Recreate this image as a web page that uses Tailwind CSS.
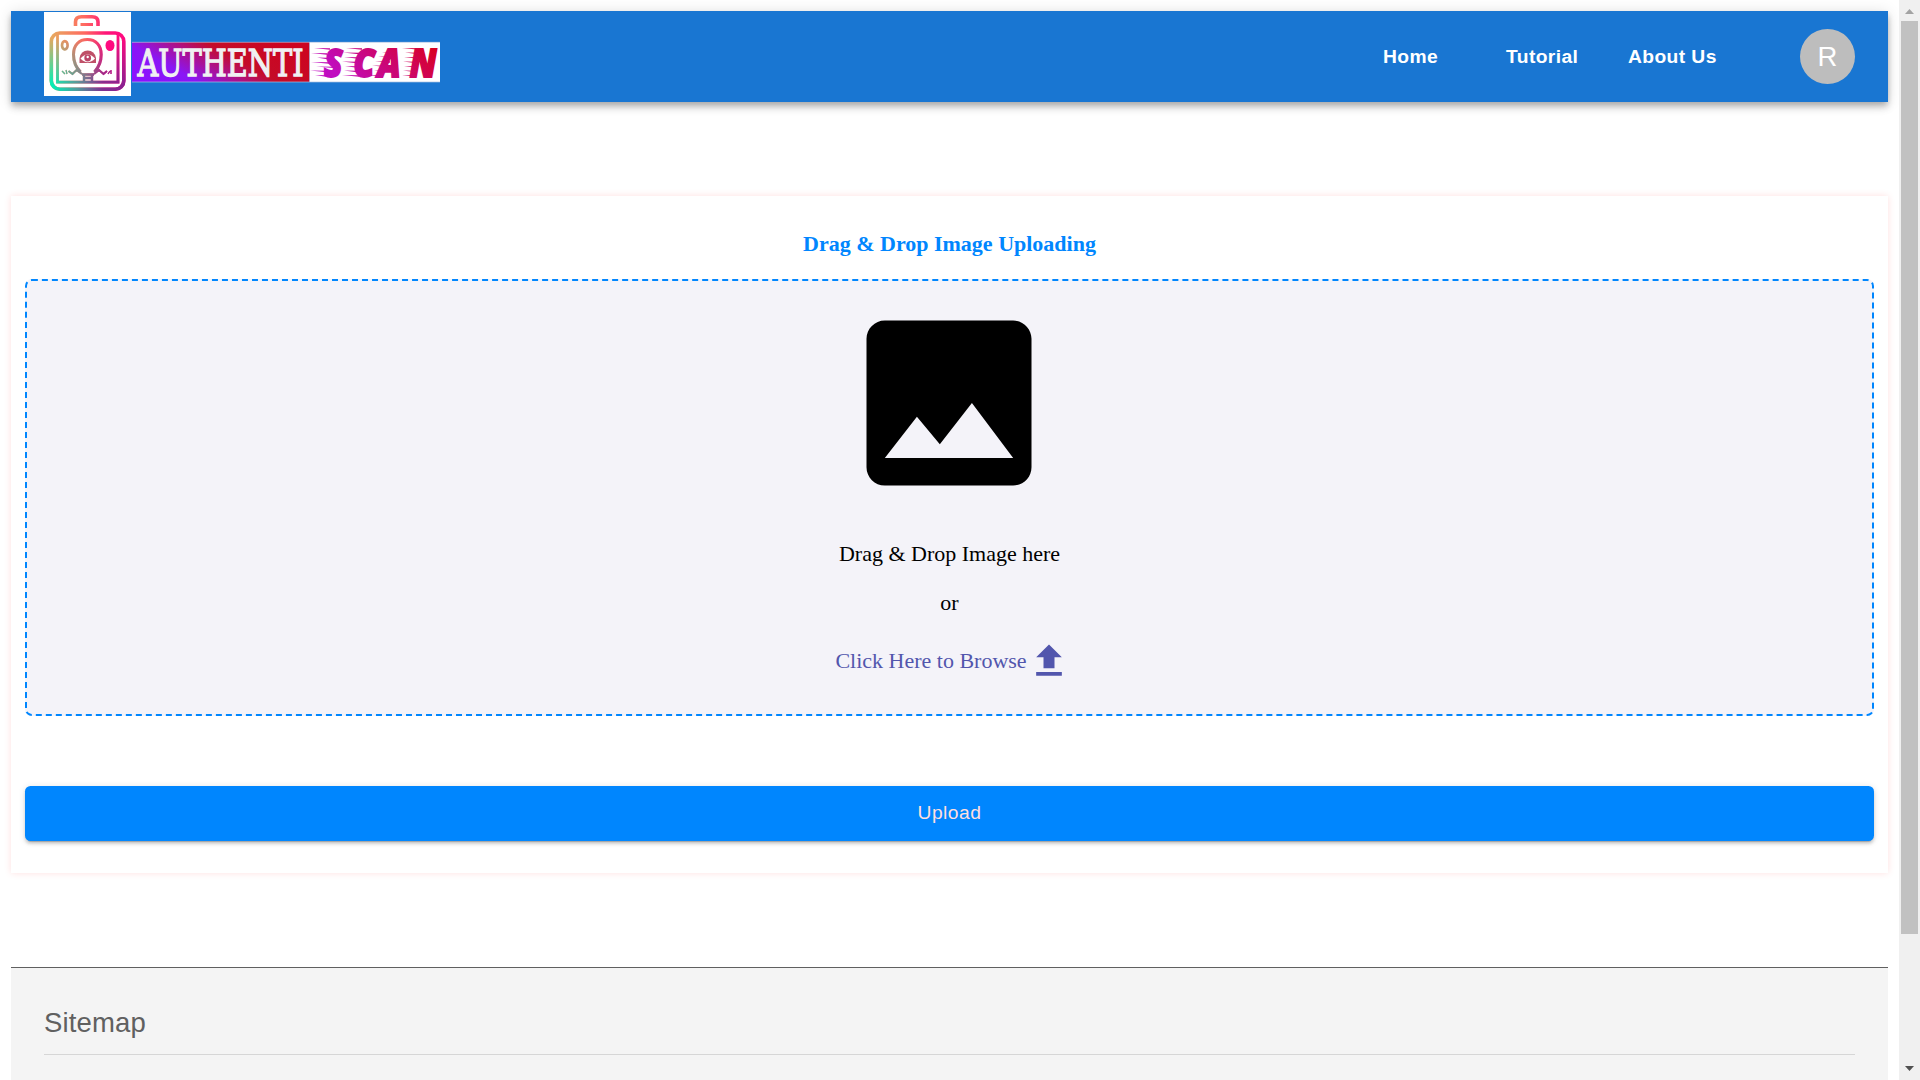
<!DOCTYPE html>
<html lang="en">
<head>
<meta charset="utf-8">
<title>AuthentiScan</title>
<script src="https://cdn.jsdelivr.net/npm/@tailwindcss/browser@4"></script>
</head>
<body class="h-[1080px] overflow-hidden bg-white flex font-['Liberation_Sans',Arial,sans-serif]">
<main class="w-[1899px] h-[1080px] overflow-hidden pt-[11px] px-[11px] flex flex-col shrink-0">
  <header class="h-[91px] shrink-0 bg-[#1976d2] flex items-start pl-[33px] pr-[33px] shadow-[0_3px_6px_-1px_rgba(0,0,0,0.2),0_6px_7px_0_rgba(0,0,0,0.14),0_1px_14px_0_rgba(0,0,0,0.12)]">
    <svg class="mt-px shrink-0" width="397" height="86" viewBox="44 12 397 86">
      <defs>
        <linearGradient id="cam" gradientUnits="userSpaceOnUse" x1="52" y1="50" x2="124" y2="50"><stop offset="0" stop-color="#e8a860"/><stop offset=".45" stop-color="#ff6a60"/><stop offset=".75" stop-color="#ff1478"/><stop offset="1" stop-color="#ff0a80"/></linearGradient>
        <linearGradient id="camLow" gradientUnits="userSpaceOnUse" x1="52" y1="80" x2="124" y2="80"><stop offset="0" stop-color="#00f0b8"/><stop offset=".35" stop-color="#509a9c"/><stop offset=".7" stop-color="#803090"/><stop offset="1" stop-color="#8a2090"/></linearGradient>
        <linearGradient id="fade" x1="0" y1="0" x2="0" y2="1"><stop offset=".3" stop-color="#000"/><stop offset=".85" stop-color="#fff"/></linearGradient>
        <mask id="low" maskUnits="userSpaceOnUse" x="44" y="12" width="88" height="86"><rect x="44" y="12" width="88" height="86" fill="url(#fade)"/></mask>
        <linearGradient id="auth" x1="0" y1=".8" x2="1" y2=".4"><stop offset="0" stop-color="#8b12ff"/><stop offset=".25" stop-color="#8a16f5"/><stop offset=".48" stop-color="#b01080"/><stop offset=".64" stop-color="#c40c28"/><stop offset="1" stop-color="#cc0420"/></linearGradient>
        <linearGradient id="scan" gradientUnits="userSpaceOnUse" x1="348" y1="85" x2="399" y2="15"><stop offset="0" stop-color="#c00cc0"/><stop offset="1" stop-color="#d80020"/></linearGradient>
        <linearGradient id="scanText" gradientUnits="userSpaceOnUse" x1="28" y1="8" x2="86" y2="-62"><stop offset="0" stop-color="#c00cc0"/><stop offset="1" stop-color="#d80020"/></linearGradient>
        <g id="camera" fill="none" stroke-width="3.6">
          <path d="M75.500 26V22q0-5.200 6-5.200h10.500q6 0 6 5.200V26" />
          <path d="M80.500 24.500H93" stroke-width="3"/>
          <rect x="51.300" y="33" width="72.500" height="56.300" rx="8.500"/>
          <path d="M57.500 34v48.200h60.500V34" stroke-width="2.800"/>
          <path d="M80.500 72C75.500 67 73.500 62 73.500 54.500 73.500 45 79 39.500 87.300 39.500S101.200 45 101.200 54.500C101.200 62 99 67 94.500 72" stroke-width="3"/>
          <path d="M82 74.500H94M84 82V74M92 82V74M84 78H92" stroke-width="2.300"/>
          <path d="M82 74l-5.500-4-4 4-4-3M94 74l5-4 4.500 4 3.500-3" stroke-width="2"/>
          <path d="M62 71l3 3M66 70l1 4M108 74l2-3M111 70v4" stroke-width="1.300"/>
          <ellipse cx="64.800" cy="45.300" rx="2.800" ry="4.200" stroke-width="2.600"/>
        </g>
      </defs>
      <rect x="44" y="12" width="87" height="84" fill="#fff"/>
      <use href="#camera" stroke="url(#cam)"/>
      <use href="#camera" stroke="url(#camLow)" mask="url(#low)"/>
      <path d="M79.500 63V58Q81 50.500 87.700 50.500T96 58V63Z" fill="#bf5068"/>
      <path d="M80.500 58.500Q87.700 50.500 95 58.500Q87.700 66 80.500 58.500Z" fill="#fff"/>
      <circle cx="87.700" cy="58" r="3.400" fill="#bc4468"/>
      <circle cx="87.700" cy="57" r="1.200" fill="#fff"/>
      <ellipse cx="110" cy="45.500" rx="4.500" ry="5.500" fill="#ff0a80"/>
      <rect x="132" y="42" width="177.500" height="40" fill="url(#auth)"/>
      <rect x="309.500" y="42" width="130.500" height="40" fill="#fff"/>
      <path d="M132 42.300H440M132 82H440" stroke="#a9bfe0" stroke-width="1" opacity=".7"/>
      <text x="137.500" y="75.500" textLength="166" lengthAdjust="spacingAndGlyphs" font-family="DejaVu Serif" font-size="37" fill="#f0f0f2" stroke="#f0f0f2" stroke-width="1.300">AUTHENTI</text>
      <text transform="translate(324 76.500) scale(.88 1)" x="0 33.500 61 97.500" y="0" font-family="Open Sans" font-weight="800" font-style="italic" font-size="38.500" stroke-width="1.800" stroke="url(#scanText)" fill="url(#scanText)">SCAN</text>
      <g fill="url(#scan)">
        <path d="M314 48l16 .2v1.600zM311 53l16 .2v1.600zM317 57.500l10 .2v1.600zM311 62l18 .2v1.600zM316 66.500l20 .2v1.600zM310 70.500l17 .2v1.600zM315 75l11 .2v1.600z"/>
        <path d="M346 48l16 .2v1.600zM343 52.500l16 .2v1.600zM344 57l14 .2v1.600zM342 61.500l15 .2v1.600zM345 66l12 .2v1.600zM344 70.500l13 .2v1.600zM342 75l17 .2v1.600z"/>
        <path d="M382 52l13 .2v1.600zM378 56.500l15 .2v1.600zM375 61l15 .2v1.600zM372 65.500l16 .2v1.600zM374 70l12 .2v1.600zM368 75l14 .2v1.600z"/>
        <path d="M402 48l17 .2v1.600zM405 52.500l14 .2v1.600zM404 57l14 .2v1.600zM403 61.500l14 .2v1.600zM404 66l12 .2v1.600zM403 70.500l13 .2v1.600zM402 75l14 .2v1.600z"/>
      </g>
    </svg>
    <nav class="ml-auto h-[91px] flex items-center text-white font-bold text-[19.25px] tracking-[0.4px] whitespace-nowrap">
      <a class="w-[123px] pt-[2px]">Home</a>
      <a class="w-[122px] pt-[2px]">Tutorial</a>
      <a class="w-[172px] pt-[2px]">About Us</a>
      <div class="size-[55px] rounded-full bg-[#bdbdbd] flex items-center justify-center text-[27.5px] font-normal tracking-normal">R</div>
    </nav>
  </header>

  <section class="mt-[94px] h-[677px] shrink-0 px-[14px] flex flex-col font-['Liberation_Serif','Times_New_Roman',serif] text-[22px] text-center shadow-[0_0_7px_#ffdfdf]">
    <h1 class="mt-[35px] h-[26px] leading-[26px] font-bold text-[#0086fe] whitespace-nowrap">Drag &amp; Drop Image Uploading</h1>
    <div class="mt-[22px] h-[437px] border-2 border-dashed border-[#0086fe] rounded-[6.875px] bg-[#f4f3f9] flex flex-col items-center pt-[12px]">
      <svg class="size-[220px] shrink-0 mr-[2px]" viewBox="0 0 24 24"><path d="M21 19V5c0-1.100-.9-2-2-2H5c-1.100 0-2 .9-2 2v14c0 1.100.9 2 2 2h14c1.100 0 2-.9 2-2zM8.500 13.500l2.500 3.010L14.500 12l4.500 6H5l3.500-4.500z"/></svg>
      <p class="mt-[28px] h-[26px] leading-[26px]">Drag &amp; Drop Image here</p>
      <p class="mt-[23px] h-[26px] leading-[26px]">or</p>
      <div class="mt-[23px] h-[44px] flex items-center text-[#5256ad]"><span class="pb-[2px]">Click Here to Browse</span><svg class="size-[44px] -mr-[7px]" viewBox="0 0 24 24" fill="currentColor"><path d="M5 20h14v-2H5v2zm0-10h4v6h6v-6h4l-7-7-7 7z"/></svg></div>
    </div>
    <button class="mt-[70px] h-[55px] pb-px rounded-[5.5px] bg-[#0086fe] text-[#ffdfdf] font-['Liberation_Sans',Arial,sans-serif] text-[19.25px] tracking-[0.5px] shadow-[0_4px_1px_-3px_rgba(0,0,0,0.2),0_3px_3px_0_rgba(0,0,0,0.14),0_1px_7px_0_rgba(0,0,0,0.12)]">Upload</button>
  </section>

  <footer class="mt-[94px] h-[113px] shrink-0 border-t border-[#606060] bg-[#f4f4f4] px-[33px]">
    <h2 class="mt-[39px] h-[32px] leading-[32px] text-[27.5px] tracking-[0.15px] text-[#606060]">Sitemap</h2>
    <hr class="mt-[15px] border-[#d6d6d6]">
  </footer>
</main>
<aside class="w-[21px] h-[1080px] bg-[#f0f0f0] flex flex-col items-center shrink-0">
  <svg class="h-[21px] shrink-0" width="17" height="21"><path d="M4 14L8.500 9L13 14Z" fill="#a3a3a3"/></svg>
  <div class="w-[17px] h-[913px] bg-[#c1c1c1]"></div>
  <svg class="mt-auto shrink-0" width="17" height="21"><path d="M4 7L8.500 12L13 7Z" fill="#505050"/></svg>
</aside>
</body>
</html>
